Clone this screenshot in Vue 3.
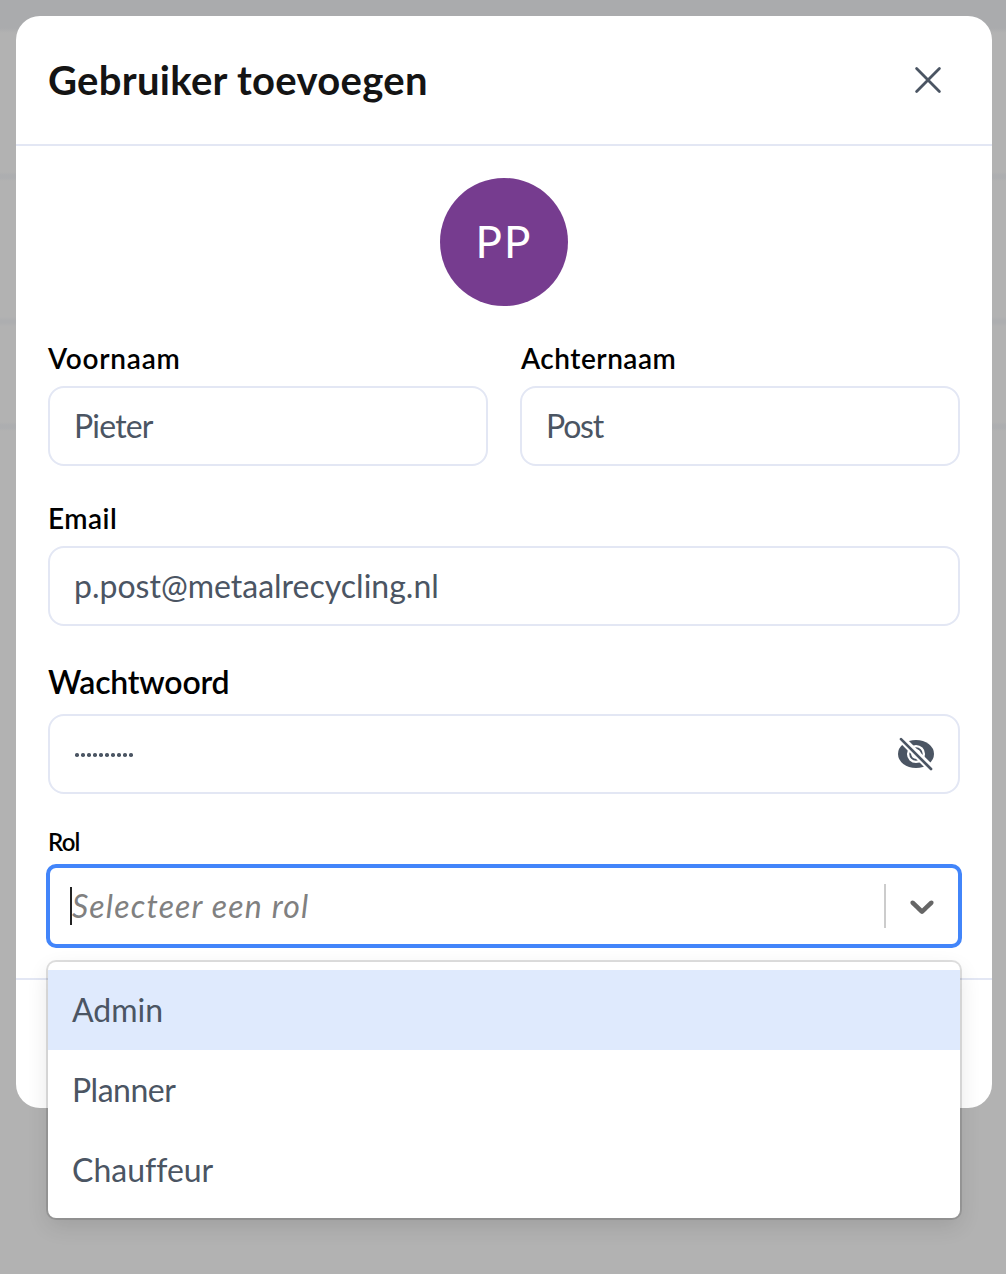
<script setup>
import { ref } from 'vue'

const user = ref({ first: 'Pieter', last: 'Post', email: 'p.post@metaalrecycling.nl' })
const passwordLength = 10
const roles = ['Admin', 'Planner', 'Chauffeur']
const active = ref('Admin')
</script>

<template>
  <div class="page">
    <section class="modal" role="dialog">
      <header class="header">
        <h1 class="title">Gebruiker toevoegen</h1>
        <button class="close" type="button" aria-label="Sluiten">
          <svg width="28" height="28" viewBox="0 0 28 28" fill="none" stroke="#4b5563" stroke-width="2.8" stroke-linecap="round">
            <path d="M2.6 2.6 25.4 25.4M25.4 2.6 2.6 25.4" />
          </svg>
        </button>
      </header>

      <div class="body">
        <div class="avatar"><span class="initials">PP</span></div>

        <div class="columns">
          <div class="field">
            <label class="label l-first">Voornaam</label>
            <div class="input"><span class="value v-first">{{ user.first }}</span></div>
          </div>
          <div class="field">
            <label class="label l-last">Achternaam</label>
            <div class="input"><span class="value v-last">{{ user.last }}</span></div>
          </div>
        </div>

        <div class="field email">
          <label class="label l-email">Email</label>
          <div class="input"><span class="value">{{ user.email }}</span></div>
        </div>

        <div class="field password">
          <label class="label large">Wachtwoord</label>
          <div class="input">
            <span class="dots"><i v-for="n in passwordLength" :key="n" class="dot"></i></span>
            <svg class="eye" width="36" height="34" viewBox="0 0 36 34">
              <ellipse cx="18" cy="17" rx="18" ry="14" fill="#4b5563" />
              <circle cx="18" cy="17" r="7.9" fill="none" stroke="#fff" stroke-width="2.3" />
              <circle cx="18" cy="17" r="3.9" fill="none" stroke="#fff" stroke-width="1.8" />
              <path d="M1-.5 35 33.5" stroke="#fff" stroke-width="7.6" />
              <path d="M3 2.1 33 32" stroke="#4b5563" stroke-width="2.7" stroke-linecap="round" />
            </svg>
          </div>
        </div>

        <div class="field role">
          <label class="label small">Rol</label>
          <div class="select">
            <span class="caret"></span>
            <span class="placeholder">Selecteer een rol</span>
            <span class="separator"></span>
            <svg class="chevron" width="40" height="40" viewBox="0 0 20 20" fill="#666">
              <path d="M4.516 7.548c0.436-0.446 1.043-0.481 1.576 0l3.908 3.747 3.908-3.747c0.533-0.481 1.141-0.446 1.574 0 0.436 0.445 0.408 1.197 0 1.615-0.406 0.418-4.695 4.502-4.695 4.502-0.217 0.223-0.502 0.335-0.787 0.335s-0.57-0.112-0.789-0.335c0 0-4.287-4.084-4.695-4.502s-0.436-1.17 0-1.615z" />
            </svg>
            <ul class="menu">
              <li v-for="role in roles" :key="role" class="option" :class="[role.toLowerCase(), { active: role === active }]">
                <span>{{ role }}</span>
              </li>
            </ul>
          </div>
        </div>
      </div>
      <footer class="footer"></footer>
    </section>
  </div>
</template>

<style>
body { background: #b2b2b2; }
</style>

<style scoped>
* { box-sizing: border-box; }
.page {
  height: 1274px;
  padding: 16px 14px 0 16px;
  font-family: Lato, "Liberation Sans", sans-serif;
  font-variant-ligatures: none;
  color: #4b5563;
  background: linear-gradient(#aaabad 0 28px, #b2b2b2 33px 172px, #adaeb0 175px 178px, #b2b2b2 181px 317px, #adaeb0 320px 323px, #b2b2b2 326px 422px, #adaeb0 425px 428px, #b2b2b2 431px);
}
.modal {
  height: 1092px;
  display: flex;
  flex-direction: column;
  background: #fff;
  border-radius: 24px;
}
.header {
  height: 130px;
  padding: 0 50px 0 32px;
  display: flex;
  align-items: center;
  justify-content: space-between;
  border-bottom: 2px solid #e3e7f4;
}
.title { margin: 0; font-size: 40px; line-height: 56px; font-weight: 700; color: #141414; letter-spacing: 0.3px; white-space: nowrap; }
.close { display: flex; padding: 0; border: 0; background: none; }
.body { padding: 32px; display: flex; flex-direction: column; }
.avatar {
  width: 128px;
  height: 128px;
  align-self: center;
  border-radius: 50%;
  background: #763c8f;
  color: #fff;
  display: flex;
  align-items: center;
  justify-content: center;
}
.initials { padding-bottom: 1px; font-size: 44px; line-height: 53px; letter-spacing: 2px; }
.columns { margin-top: 32px; display: grid; grid-template-columns: 1fr 1fr; gap: 32px; }
.field { display: flex; flex-direction: column; }
.email, .password, .role { margin-top: 32px; }
.label { height: 48px; line-height: 40px; font-size: 28px; font-weight: 600; color: #000; white-space: nowrap; }
.l-first { letter-spacing: 0.75px; }
.l-last { padding-left: 1px; letter-spacing: 0.5px; }
.l-email { letter-spacing: 0.5px; }
.large { height: 56px; line-height: 48px; font-size: 32px; letter-spacing: -0.2px; }
.small { height: 40px; line-height: 32px; font-size: 24px; letter-spacing: -0.8px; }
.input {
  height: 80px;
  padding: 0 24px;
  display: flex;
  align-items: center;
  justify-content: space-between;
  border: 2px solid #e3e7f4;
  border-radius: 16px;
  font-size: 32px;
}
.value { padding-bottom: 2px; white-space: nowrap; }
.v-first { letter-spacing: -0.8px; }
.v-last { letter-spacing: -1.2px; }
.dots { display: flex; gap: 2.5px; padding: 2px 0 0 1px; }
.dot { width: 3.5px; height: 3.5px; border-radius: 50%; background: #4b5563; }
.eye { display: block; }
.select {
  position: relative;
  height: 84px;
  margin: -2px;
  padding: 0 16px 0 20px;
  display: flex;
  align-items: center;
  border: 4px solid #4285fa;
  border-radius: 10px;
}
.caret { width: 2px; height: 38px; background: #222; }
.placeholder { flex: 1; padding-bottom: 1px; font-size: 32px; font-style: italic; letter-spacing: 1.2px; color: #808080; white-space: nowrap; }
.separator { width: 2px; height: 44px; background: #ccc; margin-right: 16px; }
.menu {
  position: absolute;
  left: -2px;
  right: -2px;
  top: 94px;
  margin: 0;
  padding: 8px 0;
  list-style: none;
  background: #fff;
  border-radius: 8px;
  box-shadow: 0 0 0 2px rgba(0, 0, 0, 0.12), 0 8px 22px rgba(0, 0, 0, 0.11);
}
.option { height: 80px; padding: 0 24px 2px; display: flex; align-items: center; font-size: 32px; }
.planner { letter-spacing: -0.5px; }
.active { background: #dfeafd; }
.footer { flex: 1; border-top: 2px solid #e3e7f4; }
</style>
